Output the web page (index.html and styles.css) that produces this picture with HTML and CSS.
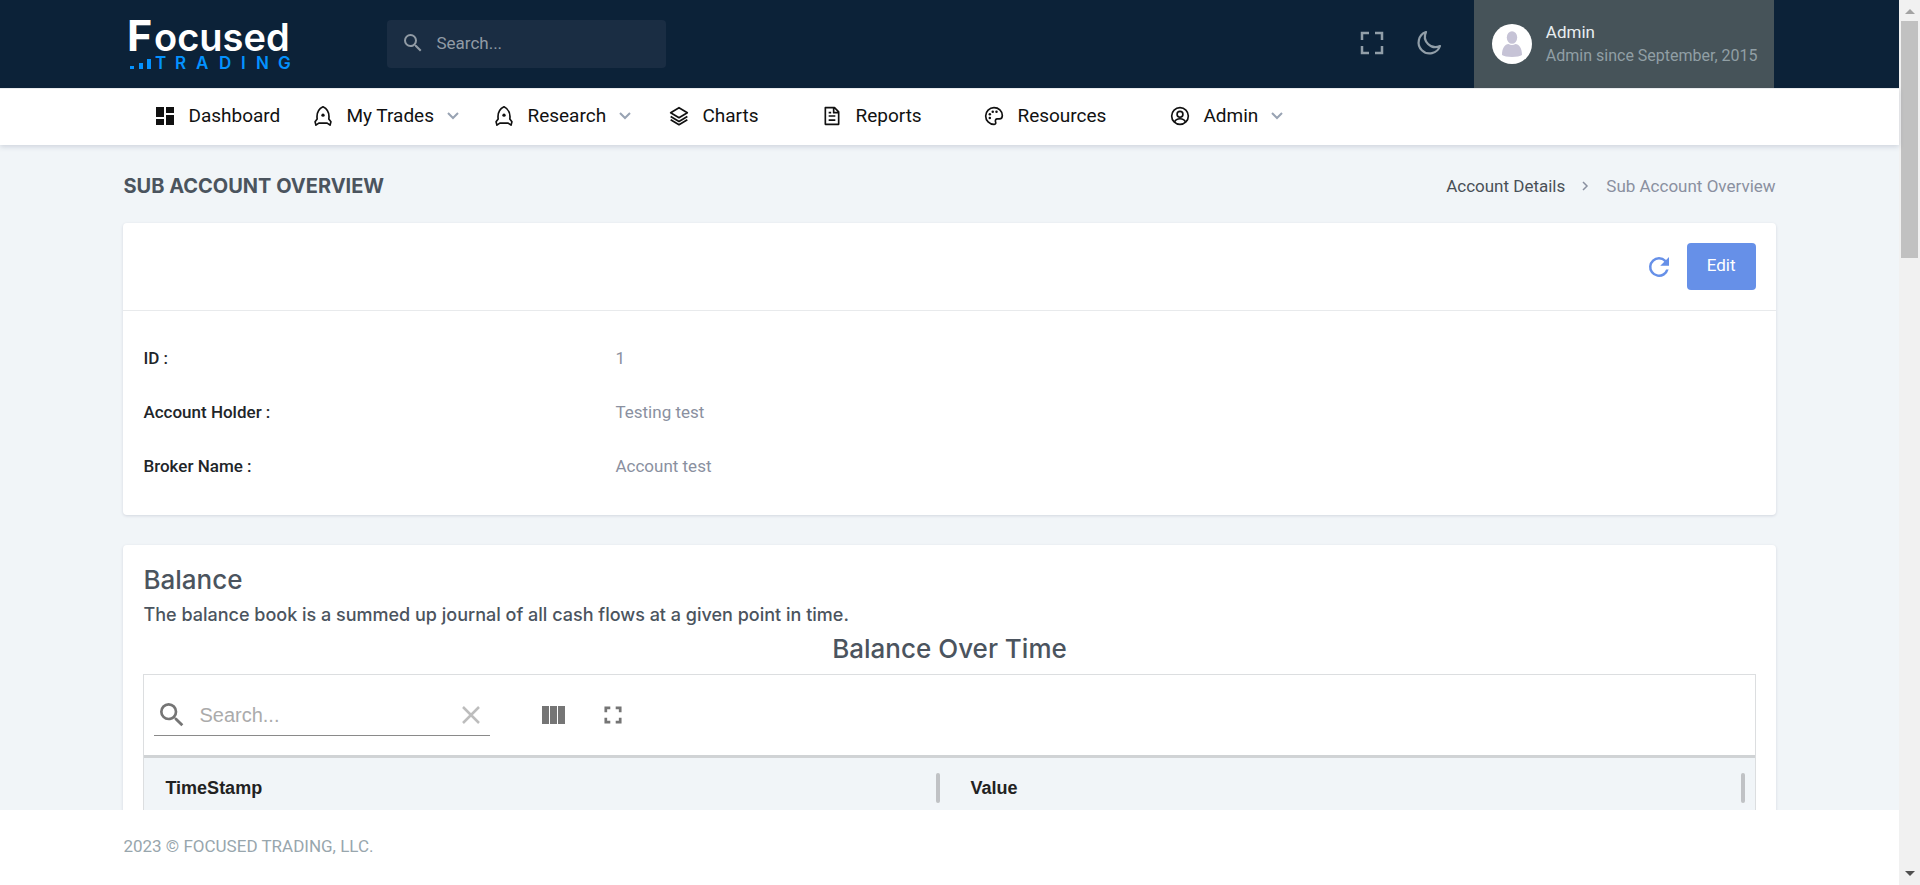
FILE: index.html
```html
<!DOCTYPE html>
<html lang="en">
<head>
<meta charset="utf-8">
<title>Sub Account Overview | Focused Trading</title>
<link rel="stylesheet" href="styles.css">
</head>
<body>
<div class="app">
  <header class="topbar">
    <div class="container topbar-inner">
      <a class="logo" href="#" aria-label="Focused Trading">
        <svg width="176" height="88" viewBox="0 0 176 88">
          <text class="logo-cap" x="4" y="51">F</text>
          <text class="logo-word" x="31" y="51">ocused</text>
          <g class="logo-bars"><rect x="7" y="66" width="4" height="3"/><rect x="16" y="63" width="4" height="6"/><rect x="24" y="59" width="4" height="10"/></g>
          <text class="logo-sub" x="32 52 73 96 118 133 155" y="69">TRADING</text>
        </svg>
      </a>
      <label class="search">
        <svg width="24" height="24" viewBox="0 0 24 24"><path fill="currentColor" d="M15.5 14h-.79l-.28-.27A6.47 6.47 0 0 0 16 9.500 6.500 6.500 0 1 0 9.500 16c1.610 0 3.090-.59 4.230-1.570l.27.28v.79l5 4.990L20.490 19l-4.990-5zm-6 0a4.500 4.500 0 1 1 0-9 4.500 4.500 0 0 1 0 9z"/></svg>
        <input type="text" placeholder="Search..." aria-label="Search">
      </label>
      <div class="top-actions">
        <button class="icon-btn" aria-label="Full screen"><svg width="24" height="24" viewBox="0 0 24 24" fill="none" stroke="currentColor" stroke-width="2.500"><path d="M2 9V2h7M15 2h7v7M22 15v7h-7M9 22H2v-7"/></svg></button>
        <button class="icon-btn" aria-label="Dark mode"><svg width="26" height="26" viewBox="0 0 26 26" fill="none" stroke="currentColor" stroke-width="2.200" stroke-linejoin="round"><path d="M10 2A11 11 0 1 0 24 16 10.500 10.500 0 0 1 10 2z"/></svg></button>
      </div>
      <button class="user">
        <svg width="40" height="40" viewBox="0 0 40 40"><circle cx="20" cy="20" r="20" fill="#fff"/><ellipse cx="20" cy="13.500" rx="5.200" ry="6.300" fill="#c6c3d6"/><path d="M10 31c0-7 3-11 6.500-11 2 1.300 5 1.300 7 0 3.500 0 6.500 4 6.500 11-3 2.600-17 2.600-20 0z" fill="#c6c3d6"/></svg>
        <span class="user-text"><span class="user-name">Admin</span><span class="user-since">Admin since September, 2015</span></span>
      </button>
    </div>
  </header>

  <nav class="nav">
    <div class="container nav-inner">
      <a href="#"><svg width="20" height="20" viewBox="0 0 20 20" fill="currentColor"><path d="M1 1h8v10H1zM1 13h8v6H1zM11 1h8v6h-8zM11 9h8v10h-8z"/></svg>Dashboard</a>
      <a href="#"><svg width="20" height="20" viewBox="0 0 24 24" fill="none" stroke="currentColor" stroke-width="2" stroke-linejoin="round"><path d="M5 15.500C4 8 8 3 12 1c4 2 8 7 7 14.500l2.500 3.500-1 4-3.500-2.500H7L3.500 23l-1-4z"/><circle cx="12" cy="11" r="2" fill="currentColor" stroke="none"/></svg>My Trades<svg class="caret" width="12" height="8" viewBox="0 0 12 8"><path d="M1 1l5 5 5-5"/></svg></a>
      <a href="#"><svg width="20" height="20" viewBox="0 0 24 24" fill="none" stroke="currentColor" stroke-width="2" stroke-linejoin="round"><path d="M5 15.500C4 8 8 3 12 1c4 2 8 7 7 14.500l2.500 3.500-1 4-3.500-2.500H7L3.500 23l-1-4z"/><circle cx="12" cy="11" r="2" fill="currentColor" stroke="none"/></svg>Research<svg class="caret" width="12" height="8" viewBox="0 0 12 8"><path d="M1 1l5 5 5-5"/></svg></a>
      <a href="#"><svg width="20" height="20" viewBox="0 0 24 24" fill="none" stroke="currentColor" stroke-width="2" stroke-linejoin="round"><path d="M12 2l10 6-10 6L2 8zM2 12.500l10 6 10-6M2 16.500l10 6 10-6"/></svg>Charts</a>
      <a href="#"><svg width="20" height="20" viewBox="0 0 24 24" fill="none" stroke="currentColor" stroke-width="2" stroke-linejoin="round"><path d="M4 2h11l5 5v15H4zM14 2v6h6M8 8h3M8 12h8M8 17h8"/></svg>Reports</a>
      <a href="#"><svg width="20" height="20" viewBox="0 0 24 24" fill="none" stroke="currentColor" stroke-width="2"><path d="M12 2C6.500 2 2 6.500 2 12s4.500 10 10 10c1.500 0 2.500-1.200 2-2.500-1-2.500 0-4 2-4h2.500c2 0 3.500-1.500 3.500-4C22 6 17.500 2 12 2z"/><g fill="currentColor" stroke="none"><circle cx="7" cy="14.500" r="1.500"/><circle cx="7" cy="10" r="1.500"/><circle cx="10.500" cy="6.800" r="1.500"/><circle cx="15" cy="7" r="1.500"/></g></svg>Resources</a>
      <a href="#"><svg width="20" height="20" viewBox="0 0 24 24" fill="none" stroke="currentColor" stroke-width="2"><circle cx="12" cy="12" r="10"/><circle cx="12" cy="10" r="3.500"/><path d="M5.500 19c2-5 11-5 13 0"/></svg>Admin<svg class="caret" width="12" height="8" viewBox="0 0 12 8"><path d="M1 1l5 5 5-5"/></svg></a>
    </div>
  </nav>

  <main class="main">
    <div class="container">
      <div class="page-head">
        <h1>SUB ACCOUNT OVERVIEW</h1>
        <div class="crumbs"><a href="#">Account Details</a><svg width="7" height="10" viewBox="0 0 7 10"><path d="M1 1l4 4-4 4" fill="none" stroke="currentColor" stroke-width="1.500"/></svg><span>Sub Account Overview</span></div>
      </div>

      <section class="card">
        <div class="card-head">
          <button class="refresh" aria-label="Refresh"><svg width="30" height="30" viewBox="0 0 24 24"><path fill="currentColor" d="M17.650 6.350A7.960 7.960 0 0 0 12 4a8 8 0 1 0 7.730 10h-2.080A6 6 0 1 1 12 6c1.660 0 3.140.69 4.220 1.780L13 11h7V4z"/></svg></button>
          <button class="edit">Edit</button>
        </div>
        <dl class="details">
          <dt>ID :</dt><dd>1</dd>
          <dt>Account Holder :</dt><dd>Testing test</dd>
          <dt>Broker Name :</dt><dd>Account test</dd>
        </dl>
      </section>

      <section class="card balance">
        <h2>Balance</h2>
        <p class="lead">The balance book is a summed up journal of all cash flows at a given point in time.</p>
        <h2 class="center">Balance Over Time</h2>
        <div class="grid-box">
          <div class="tools">
            <div class="grid-search">
              <svg width="32" height="32" viewBox="0 0 24 24"><path fill="currentColor" d="M15.500 14h-.79l-.28-.27A6.470 6.470 0 0 0 16 9.500 6.500 6.500 0 1 0 9.500 16c1.610 0 3.090-.59 4.230-1.570l.27.28v.79l5 4.990L20.490 19l-4.990-5zm-6 0a4.500 4.500 0 1 1 0-9 4.500 4.500 0 0 1 0 9z"/></svg>
              <input type="text" placeholder="Search..." aria-label="Search balances">
              <button class="clear" aria-label="Clear search"><svg width="18" height="18" viewBox="0 0 18 18"><path d="M1 1l16 16M17 1L1 17" stroke="currentColor" stroke-width="2.500"/></svg></button>
            </div>
            <button class="tool" aria-label="Columns"><svg width="24" height="18" viewBox="0 0 24 18" fill="currentColor"><path d="M0 0h7v18H0zM8 0h7v18H8zM16 0h7v18h-7z"/></svg></button>
            <button class="tool" aria-label="Expand table"><svg width="18" height="18" viewBox="0 0 20 20" fill="none" stroke="currentColor" stroke-width="3"><path d="M2 7V2h5M13 2h5v5M18 13v5h-5M7 18H2v-5"/></svg></button>
          </div>
          <table>
            <thead><tr><th><div class="th">TimeStamp<i></i></div></th><th><div class="th">Value<i></i></div></th></tr></thead>
          </table>
        </div>
      </section>
    </div>
  </main>

  <footer class="footer"><div class="container">2023 © FOCUSED TRADING, LLC.</div></footer>
</div>
<div class="scrollbar" aria-hidden="true"><span class="up"></span><span class="thumb"></span><span class="down"></span></div>
</body>
</html>
```
FILE: styles.css
```css
* { box-sizing: border-box; }
body {
  margin: 0;
  height: 100vh;
  display: grid;
  grid-template-columns: minmax(0, 1fr) 21px;
  background: #f1f5f8;
  color: #4b545e;
  font: 17px/24px Roboto, "Liberation Sans", sans-serif;
  overflow: hidden;
}
h1, h2, p, dl, dd { margin: 0; }
svg { display: block; flex: none; }
button { border: 0; padding: 0; background: none; color: inherit; font: inherit; }
input { border: 0; outline: 0; padding: 0; min-width: 0; background: none; font: inherit; color: inherit; }
a { color: inherit; text-decoration: none; }

.app { height: 100vh; display: flex; flex-direction: column; }
.container { width: 87%; margin: 0 auto; }

.topbar { background: #0c2238; flex: none; }
.topbar-inner { display: flex; align-items: center; height: 88px; padding-right: 2px; }
.logo text { font-family: Inter, sans-serif; }
.logo .logo-cap { font-size: 43px; font-weight: 700; fill: #fff; }
.logo .logo-word { font-size: 38px; font-weight: 600; fill: #fff; }
.logo .logo-sub { font-size: 17px; font-weight: 600; fill: #0492ff; }
.logo-bars { fill: #0492ff; }
.search {
  display: flex; align-items: center; gap: 11px;
  width: 279px; height: 48px; margin-left: 88px; padding: 0 14px 2px;
  border-radius: 4px; background: #1a2d43; color: #919ba5;
}
.search input { flex: 1; }
.search input::placeholder { color: #919ba5; opacity: 1; }
.top-actions { display: flex; gap: 32px; margin-left: auto; margin-right: 32px; padding-bottom: 2px; color: #919ea8; }
.user {
  display: flex; align-items: center; gap: 14px; height: 88px;
  padding: 0 16px 0 18px; background: #465359; text-align: left;
}
.user-text { display: flex; flex-direction: column; padding-bottom: 1px; }
.user-name { color: #e8edf0; }
.user-since { color: #919fa5; font-size: 16px; }

.nav { flex: none; background: #fff; border-top: 1px solid #e9ecef; box-shadow: 0 2px 5px rgba(40, 50, 90, .16); position: relative; }
.nav-inner {
  display: grid; align-items: center; height: 56px; padding: 0 0 2px 32px;
  grid-template-columns: 158px 181px 175px 153px 162px 186px auto;
}
.nav a { display: flex; align-items: center; gap: 13px; color: #111; font-size: 19px; }
.caret { fill: none; stroke: #98a3b3; stroke-width: 2; }

.main { flex: 1; min-height: 0; overflow: hidden; }
.page-head { display: flex; align-items: center; justify-content: space-between; height: 78px; padding-top: 3px; }
h1, h2, .lead { font-family: Inter, "Open Sans", sans-serif; }
h1 { font-size: 20px; font-weight: 700; }
.crumbs { display: flex; align-items: center; gap: 17px; color: #8a90a0; }
.crumbs a { color: #495057; }

.card { background: #fff; border-radius: 4px; box-shadow: 0 1px 3px rgba(40, 50, 90, .15); margin-bottom: 30px; }
.card-head { display: flex; align-items: center; justify-content: flex-end; gap: 13px; padding: 20px; border-bottom: 1px solid #e8eaec; }
.refresh { color: #6690e8; }
.edit { width: 69px; height: 47px; border-radius: 4px; background: #6690e8; color: #fff; padding-bottom: 4px; }
.details { display: grid; grid-template-columns: 472px 1fr; row-gap: 30px; padding: 35px 20px 37px; }
.details dt { color: #212529; font-weight: 500; }
.details dd { color: #8a90a0; }

.balance { padding: 17px 20px 0; }
h2 { font-size: 26px; line-height: 36px; font-weight: 500; }
.lead { font-size: 18px; line-height: 33px; font-weight: 500; }
.center { text-align: center; }
.grid-box { margin-top: 7px; border: 1px solid #dcdee0; font-family: "Liberation Sans", sans-serif; }
.tools { display: flex; align-items: center; height: 80px; padding-left: 10px; color: #757575; }
.grid-search { display: flex; align-items: center; width: 336px; height: 41px; margin-right: 52px; padding: 0 10px 0 2px; border-bottom: 1px solid #8a8a8a; }
.grid-search input { flex: 1; margin-left: 11px; font-size: 20px; }
.grid-search input::placeholder { color: #ababab; opacity: 1; }
.clear { color: #bdbdbd; }
.tool + .tool { margin-left: 38px; }
table { width: 100%; table-layout: fixed; border-collapse: collapse; border-top: 3px solid #d0d3d5; background: #f1f5f8; }
th { padding: 0; color: #222; font-size: 18px; text-align: left; }
.th { display: flex; align-items: center; justify-content: space-between; height: 60px; padding: 0 10px 0 21px; }
.th i { width: 4px; height: 30px; border-radius: 2px; background: #c0c2c5; }

.footer { flex: none; padding: 24px 0 27px; background: #fff; color: #98a6ad; }

.scrollbar { display: flex; flex-direction: column; align-items: center; padding: 9px 0; background: #f1f1f1; }
.up, .down { border: 5px solid transparent; border-top-width: 0; border-bottom-color: #a3a3a3; }
.down { border-top: 5px solid #505050; border-bottom-width: 0; margin-top: auto; }
.thumb { width: 17px; height: 237px; margin-top: 7px; background: #c1c1c1; }
```
